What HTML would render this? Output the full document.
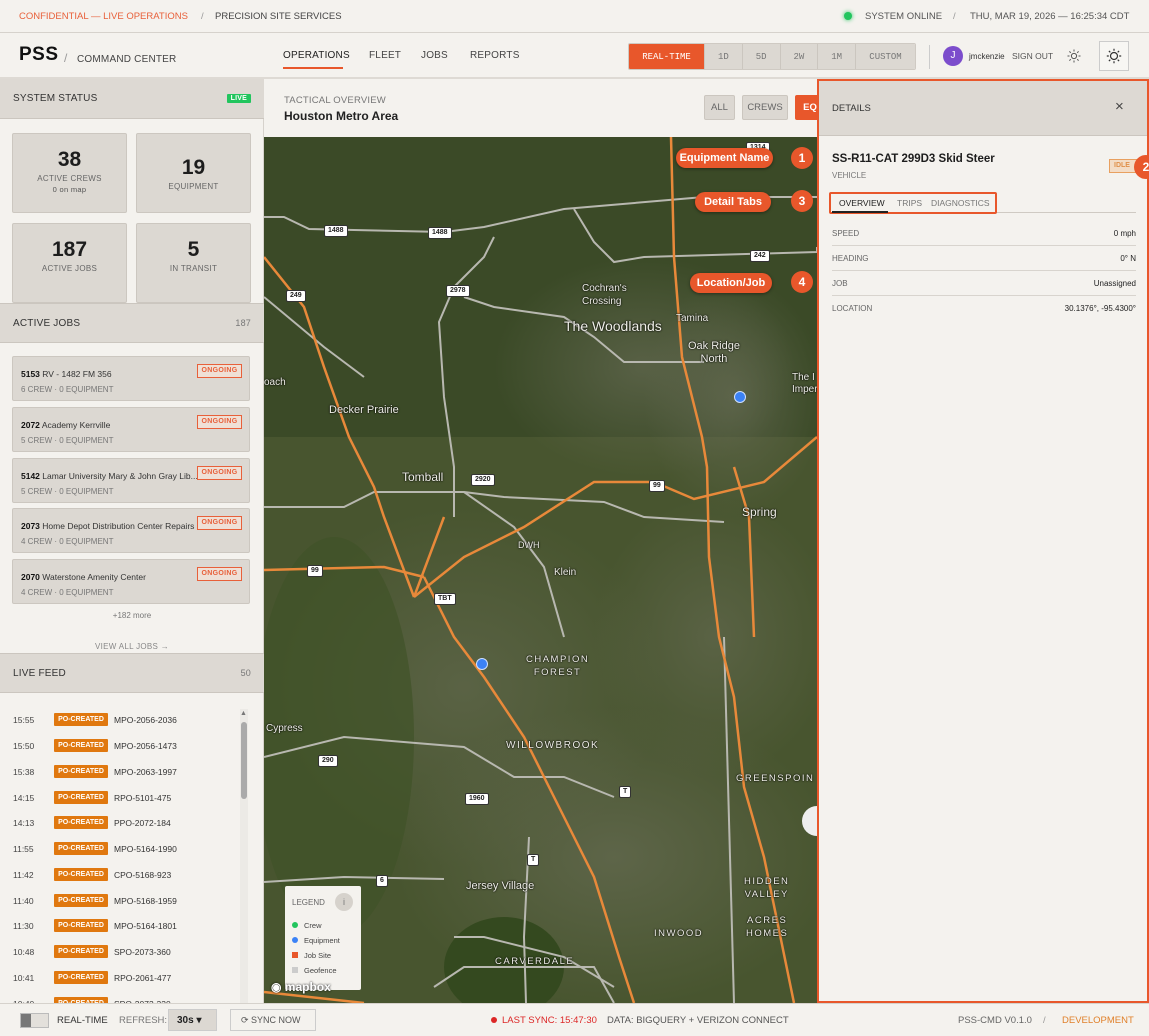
<!DOCTYPE html>
<html><head><meta charset="utf-8"><style>
*{box-sizing:border-box;margin:0;padding:0;white-space:nowrap}
body{width:1149px;height:1036px;overflow:hidden;background:#f4f2ee;font-family:"Liberation Sans",sans-serif;color:#2a2a2a;position:relative;font-size:11px}
.abs{position:absolute}
.topbar{left:0;top:0;width:1149px;height:33px;border-bottom:1px solid #d6d2cc;font-size:9.5px;color:#555}
.hdr{left:0;top:33px;width:1149px;height:46px;border-bottom:2px solid #dedad4}
.nav span{position:absolute;top:17px;font-size:10px;color:#444;letter-spacing:.2px}
.seg{left:628px;top:43px;height:27px;width:288px;display:flex;border:1px solid #cfcac3;border-radius:2px;overflow:hidden;font-family:"Liberation Mono",monospace;font-size:9px;color:#777}
.seg div{flex:1;display:flex;align-items:center;justify-content:center;background:#dcd8d2;border-left:1px solid #cbc6bf}
.side{left:0;top:79px;width:264px;height:924px;background:#f4f2ee;border-right:1px solid #d6d2cc}
.sh{position:absolute;left:0;width:264px;height:40px;background:#ddd9d3;border-bottom:1px solid #cbc6bf;border-top:1px solid #cbc6bf;font-size:10px;color:#333;padding:14px 13px;letter-spacing:.2px}
.sh b{position:absolute;right:13px;top:14px;font-weight:normal;color:#777;font-size:9px}
.card{position:absolute;width:115px;height:80px;background:#dcd8d2;border:1px solid #ccc7c0;border-radius:2px;text-align:center}
.card .n{font-size:21px;font-weight:bold;margin-top:14px;color:#1d1d1d}
.card .l{font-size:8px;color:#666;margin-top:2px;letter-spacing:.3px}
.job{position:absolute;left:12px;width:238px;height:45px;background:#dcd8d2;border:1px solid #ccc7c0;border-radius:2px}
.job .t{position:absolute;left:8px;top:12px;font-size:8.5px;color:#333}
.job .t b{color:#111}
.job .s{position:absolute;left:8px;top:28px;font-size:8px;color:#777}
.job .g{position:absolute;right:7px;top:7px;width:45px;height:14px;border:1px solid #e8603a;color:#e8603a;font-size:7px;text-align:center;line-height:12px;font-weight:bold;letter-spacing:.3px;background:#efe0d6}
.feed{position:absolute;left:13px;font-size:8.5px;color:#444;width:200px;height:14px}
.feed .tm{position:absolute;left:0;top:2px}
.feed .pc{position:absolute;left:41px;top:0;width:54px;height:13px;background:#e0780f;color:#fff;font-size:7px;font-weight:bold;text-align:center;line-height:13px;border-radius:1px}
.feed .id{position:absolute;left:101px;top:2px;color:#333}
.map{left:264px;top:137px;width:553px;height:866px;background:#4b5a3a;overflow:hidden}
.mhdr{left:264px;top:79px;width:553px;height:58px;background:#f4f2ee}
.fbtn{position:absolute;top:95px;height:25px;border:1px solid #cbc6bf;background:#dcd8d2;font-size:9.5px;color:#666;line-height:23px;text-align:center;border-radius:2px}
.det{left:817px;top:79px;width:332px;height:924px;background:#f4f2ee;border:2px solid #e8572b;border-top-width:2px}
.row{position:absolute;left:13px;width:304px;height:25px;border-bottom:1px solid #d8d4ce;font-size:8px;color:#666}
.row span{position:absolute;top:8px}
.row .v{right:0;color:#222}
.pill{position:absolute;height:20px;background:#e8572b;color:#fff;font-weight:bold;font-size:11px;border-radius:10px;text-align:center;line-height:20px;box-shadow:0 1px 3px rgba(0,0,0,.4)}
.num{position:absolute;width:22px;height:22px;border-radius:50%;background:#e8572b;color:#fff;font-weight:bold;font-size:12px;text-align:center;line-height:22px}
.foot{left:0;top:1003px;width:1149px;height:33px;background:#f4f2ee;border-top:1px solid #d6d2cc;font-size:9.5px;color:#555}
.ml{position:absolute;color:#f0f0e8;font-size:11px;text-shadow:0 0 2px #000,0 0 1px #000}
.sh2{position:absolute;background:#fff;border:1px solid #333;font-size:7px;font-weight:bold;padding:0 3px;border-radius:2px;line-height:10px;color:#222}
</style></head><body>
<div class="abs topbar">
 <span class="abs" style="left:19px;top:11px;color:#e8603a">CONFIDENTIAL — LIVE OPERATIONS</span>
 <span class="abs" style="left:201px;top:11px;color:#999">/</span>
 <span class="abs" style="left:215px;top:11px;color:#444">PRECISION SITE SERVICES</span>
 <span class="abs" style="left:844px;top:12px;width:8px;height:8px;border-radius:50%;background:#22c55e;box-shadow:0 0 4px #22c55e"></span>
 <span class="abs" style="left:865px;top:11px">SYSTEM ONLINE</span>
 <span class="abs" style="left:953px;top:11px;color:#999">/</span>
 <span class="abs" style="left:970px;top:11px">THU, MAR 19, 2026 — 16:25:34 CDT</span>
</div>
<div class="abs hdr nav">
 <span style="left:19px;top:11px;font-size:19px;font-weight:bold;color:#111;letter-spacing:.5px">PSS</span>
 <span style="left:64px;top:18px;color:#999;font-size:12px">/</span>
 <span style="left:77px;top:21px;font-size:10px;color:#444">COMMAND CENTER</span>
 <span style="left:283px;color:#222">OPERATIONS</span>
 <span style="left:283px;top:34px;width:60px;height:2px;background:#e8572b"></span>
 <span style="left:369px">FLEET</span>
 <span style="left:421px">JOBS</span>
 <span style="left:470px">REPORTS</span>
</div>
<div class="abs seg"><div style="background:#e8572b;color:#fff;flex:0 0 75px;border:0">REAL-TIME</div><div>1D</div><div>5D</div><div>2W</div><div>1M</div><div style="flex:0 0 60px">CUSTOM</div></div>
<div class="abs" style="left:929px;top:45px;width:1px;height:24px;background:#ccc"></div>
<div class="abs" style="left:943px;top:46px;width:20px;height:20px;border-radius:50%;background:#7c4dcc;color:#fff;font-size:10px;text-align:center;line-height:20px">J</div>
<div class="abs" style="left:969px;top:52px;font-size:8px;color:#333">jmckenzie</div>
<div class="abs" style="left:1012px;top:51px;font-size:8.5px;color:#555">SIGN OUT</div>
<svg class="abs" style="left:1067px;top:49px" width="14" height="14" viewBox="0 0 14 14" stroke="#555" fill="none"><circle cx="7" cy="7" r="2.6"/><path d="M7 0.5v2M7 11.5v2M0.5 7h2M11.5 7h2M2.4 2.4l1.4 1.4M10.2 10.2l1.4 1.4M2.4 11.6l1.4-1.4M10.2 3.8l1.4-1.4"/></svg>
<div class="abs" style="left:1099px;top:41px;width:30px;height:30px;border:1px solid #ccc;background:#f7f6f3"></div>
<svg class="abs" style="left:1106px;top:48px" width="16" height="16" viewBox="0 0 16 16" stroke="#333" fill="none" stroke-width="1.2"><circle cx="8" cy="8" r="3.5"/><path d="M8 .8v2M8 13.2v2M.8 8h2M13.2 8h2M2.9 2.9l1.4 1.4M11.7 11.7l1.4 1.4M2.9 13.1l1.4-1.4M11.7 4.3l1.4-1.4"/></svg>

<div class="abs side">
 <div class="sh" style="top:0;border-top:0">SYSTEM STATUS<b style="top:15px;background:#22c55e;color:#fff;font-weight:bold;font-size:7px;padding:1px 4px;border-radius:1px">LIVE</b></div>
 <div class="card" style="left:12px;top:54px"><div class="n">38</div><div class="l">ACTIVE CREWS</div><div class="l" style="font-size:7.5px;color:#555">0 on map</div></div>
 <div class="card" style="left:136px;top:54px"><div class="n" style="margin-top:22px">19</div><div class="l">EQUIPMENT</div></div>
 <div class="card" style="left:12px;top:144px"><div class="n">187</div><div class="l">ACTIVE JOBS</div></div>
 <div class="card" style="left:136px;top:144px"><div class="n">5</div><div class="l">IN TRANSIT</div></div>
 <div class="sh" style="top:224px">ACTIVE JOBS<b>187</b></div>
 <div class="job" style="top:277px"><div class="t"><b>5153</b> RV - 1482 FM 356</div><div class="s">6 CREW · 0 EQUIPMENT</div><div class="g">ONGOING</div></div>
 <div class="job" style="top:328px"><div class="t"><b>2072</b> Academy Kerrville</div><div class="s">5 CREW · 0 EQUIPMENT</div><div class="g">ONGOING</div></div>
 <div class="job" style="top:379px"><div class="t"><b>5142</b> Lamar University Mary &amp; John Gray Lib...</div><div class="s">5 CREW · 0 EQUIPMENT</div><div class="g">ONGOING</div></div>
 <div class="job" style="top:429px"><div class="t"><b>2073</b> Home Depot Distribution Center Repairs</div><div class="s">4 CREW · 0 EQUIPMENT</div><div class="g">ONGOING</div></div>
 <div class="job" style="top:480px"><div class="t"><b>2070</b> Waterstone Amenity Center</div><div class="s">4 CREW · 0 EQUIPMENT</div><div class="g">ONGOING</div></div>
 <div class="abs" style="left:0;width:264px;text-align:center;top:532px;font-size:8px;color:#777">+182 more</div>
 <div class="abs" style="left:0;width:264px;text-align:center;top:563px;font-size:8px;color:#888;letter-spacing:.3px">VIEW ALL JOBS →</div>
 <div class="sh" style="top:574px">LIVE FEED<b>50</b></div>
 <div class="abs" style="left:240px;top:630px;width:8px;height:294px;background:#eceae6"></div>
 <div class="abs" style="left:241px;top:643px;width:6px;height:77px;background:#aaa;border-radius:3px"></div>
 <div class="abs" style="left:240px;top:631px;font-size:7px;color:#777">▲</div>
</div>
<div class="feed" style="top:713px"><span class="tm">15:55</span><span class="pc">PO-CREATED</span><span class="id">MPO-2056-2036</span></div>
<div class="feed" style="top:739px"><span class="tm">15:50</span><span class="pc">PO-CREATED</span><span class="id">MPO-2056-1473</span></div>
<div class="feed" style="top:765px"><span class="tm">15:38</span><span class="pc">PO-CREATED</span><span class="id">MPO-2063-1997</span></div>
<div class="feed" style="top:791px"><span class="tm">14:15</span><span class="pc">PO-CREATED</span><span class="id">RPO-5101-475</span></div>
<div class="feed" style="top:816px"><span class="tm">14:13</span><span class="pc">PO-CREATED</span><span class="id">PPO-2072-184</span></div>
<div class="feed" style="top:842px"><span class="tm">11:55</span><span class="pc">PO-CREATED</span><span class="id">MPO-5164-1990</span></div>
<div class="feed" style="top:868px"><span class="tm">11:42</span><span class="pc">PO-CREATED</span><span class="id">CPO-5168-923</span></div>
<div class="feed" style="top:894px"><span class="tm">11:40</span><span class="pc">PO-CREATED</span><span class="id">MPO-5168-1959</span></div>
<div class="feed" style="top:919px"><span class="tm">11:30</span><span class="pc">PO-CREATED</span><span class="id">MPO-5164-1801</span></div>
<div class="feed" style="top:945px"><span class="tm">10:48</span><span class="pc">PO-CREATED</span><span class="id">SPO-2073-360</span></div>
<div class="feed" style="top:971px"><span class="tm">10:41</span><span class="pc">PO-CREATED</span><span class="id">RPO-2061-477</span></div>
<div class="feed" style="top:997px;height:6px;overflow:hidden"><span class="tm">10:40</span><span class="pc">PO-CREATED</span><span class="id">SPO-2073-330</span></div>

<div class="abs mhdr">
 <div class="abs" style="left:20px;top:16px;font-size:9.5px;color:#777;letter-spacing:.2px">TACTICAL OVERVIEW</div>
 <div class="abs" style="left:20px;top:30px;font-size:12px;font-weight:bold;color:#222">Houston Metro Area</div>
</div>
<div class="fbtn" style="left:704px;width:31px">ALL</div>
<div class="fbtn" style="left:742px;width:46px">CREWS</div>
<div class="fbtn" style="left:795px;width:30px;background:#e8572b;color:#fff;border-color:#e8572b;font-weight:bold">EQ</div>

<div class="abs map">
<svg width="553" height="866" style="position:absolute;left:0;top:0">
 <defs><radialGradient id="g1"><stop offset="0" stop-color="#6c705a"/><stop offset="1" stop-color="#6c705a" stop-opacity="0"/></radialGradient></defs>
 <rect width="553" height="866" fill="#48552f"/>
 <rect x="0" y="0" width="553" height="300" fill="#3b4a27"/>
 <ellipse cx="380" cy="230" rx="150" ry="110" fill="url(#g1)" opacity=".6"/>
 <ellipse cx="470" cy="260" rx="90" ry="120" fill="url(#g1)" opacity=".6"/>
 <ellipse cx="200" cy="550" rx="200" ry="180" fill="url(#g1)" opacity=".5"/>
 <ellipse cx="350" cy="720" rx="220" ry="150" fill="url(#g1)" opacity=".6"/>
 <ellipse cx="450" cy="500" rx="120" ry="140" fill="url(#g1)" opacity=".5"/>
 <ellipse cx="70" cy="600" rx="80" ry="200" fill="#405228" opacity=".7"/>
 <ellipse cx="240" cy="830" rx="60" ry="50" fill="#34491f"/>
 <g fill="none" stroke="#b8b8b0" stroke-width="2">
  <path d="M0 80 L20 80 L45 92 L180 95 L220 90 L300 72 L440 60 L553 60"/>
  <path d="M230 100 L220 120 L190 150 L175 185 L180 260 L190 330 L190 380"/>
  <path d="M310 72 L330 105 L350 125 L380 120 L553 115 L553 110"/>
  <path d="M200 160 L230 170 L300 180 L330 200 L360 225 L440 225"/>
  <path d="M0 370 L80 370 L110 355 L200 355 L240 360 L340 365 L380 380 L460 385"/>
  <path d="M200 355 L250 390 L280 430 L300 500"/>
  <path d="M0 160 L60 210 L100 240"/>
  <path d="M0 620 L80 600 L200 610 L250 640 L300 640 L350 660"/>
  <path d="M265 700 L260 800 L262 866"/>
  <path d="M190 800 L220 800 L300 820 L350 850"/>
  <path d="M0 745 L80 740 L180 742"/>
  <path d="M170 850 L200 830 L330 830 L350 866"/>
  <path d="M460 500 L470 866"/>
 </g>
 <g fill="none" stroke="#e8893a" stroke-width="2.5">
  <path d="M407 0 L410 120 L418 220 L438 300 L443 330 L445 420 L455 500 L470 560 L480 650 L500 720 L530 866"/>
  <path d="M0 120 L40 170 L60 230 L85 300 L110 350 L120 380 L135 420 L150 460"/>
  <path d="M160 440 L190 500 L220 540 L260 600 L290 660 L330 740 L355 820 L370 866"/>
  <path d="M0 433 L120 430 L160 440"/>
  <path d="M150 460 L200 420 L260 390 L330 345 L390 345 L430 362 L500 345 L553 300"/>
  <path d="M470 330 L485 380 L490 500"/>
  <path d="M0 855 L100 866"/>
  <path d="M180 380 L150 460"/>
 </g>
</svg>
 <div class="sh2" style="left:482px;top:5px">1314</div>
 <div class="sh2" style="left:60px;top:88px">1488</div>
 <div class="sh2" style="left:164px;top:90px">1488</div>
 <div class="sh2" style="left:486px;top:113px">242</div>
 <div class="sh2" style="left:22px;top:153px">249</div>
 <div class="sh2" style="left:182px;top:148px">2978</div>
 <div class="sh2" style="left:207px;top:337px">2920</div>
 <div class="sh2" style="left:385px;top:343px">99</div>
 <div class="sh2" style="left:43px;top:428px">99</div>
 <div class="sh2" style="left:170px;top:456px">TBT</div>
 <div class="sh2" style="left:54px;top:618px">290</div>
 <div class="sh2" style="left:201px;top:656px">1960</div>
 <div class="sh2" style="left:355px;top:649px">T</div>
 <div class="sh2" style="left:263px;top:717px">T</div>
 <div class="sh2" style="left:112px;top:738px">6</div>
 <div class="ml" style="left:318px;top:145px;font-size:10px;line-height:13px">Cochran's<br>Crossing</div>
 <div class="ml" style="left:300px;top:181px;font-size:14px">The Woodlands</div>
 <div class="ml" style="left:412px;top:176px;font-size:10px">Tamina</div>
 <div class="ml" style="left:424px;top:203px;font-size:11px;line-height:13px;text-align:center">Oak Ridge<br>North</div>
 <div class="ml" style="left:528px;top:235px;font-size:10px;line-height:12px">The I<br>Imper</div>
 <div class="ml" style="left:0px;top:240px;font-size:10px">oach</div>
 <div class="ml" style="left:65px;top:267px;font-size:11px">Decker Prairie</div>
 <div class="ml" style="left:138px;top:333px;font-size:12px">Tomball</div>
 <div class="ml" style="left:478px;top:368px;font-size:12px">Spring</div>
 <div class="ml" style="left:254px;top:403px;font-size:9px">DWH</div>
 <div class="ml" style="left:290px;top:430px;font-size:10px">Klein</div>
 <div class="ml" style="left:262px;top:516px;font-size:9.5px;letter-spacing:1.5px;line-height:13px;text-align:center">CHAMPION<br>FOREST</div>
 <div class="ml" style="left:242px;top:603px;font-size:10px;letter-spacing:1.5px">WILLOWBROOK</div>
 <div class="ml" style="left:2px;top:586px;font-size:10px">Cypress</div>
 <div class="ml" style="left:472px;top:636px;font-size:9.5px;letter-spacing:1.5px">GREENSPOIN</div>
 <div class="ml" style="left:202px;top:743px;font-size:11px">Jersey Village</div>
 <div class="ml" style="left:480px;top:738px;font-size:9.5px;letter-spacing:1.5px;line-height:13px;text-align:center">HIDDEN<br>VALLEY</div>
 <div class="ml" style="left:482px;top:777px;font-size:9.5px;letter-spacing:1.5px;line-height:13px;text-align:center">ACRES<br>HOMES</div>
 <div class="ml" style="left:390px;top:791px;font-size:9.5px;letter-spacing:1.5px">INWOOD</div>
 <div class="ml" style="left:231px;top:819px;font-size:9.5px;letter-spacing:1.5px">CARVERDALE</div>
 <div class="abs" style="left:470px;top:254px;width:12px;height:12px;border-radius:50%;background:#3b82f6;border:1px solid #cfe0ff"></div>
 <div class="abs" style="left:212px;top:521px;width:12px;height:12px;border-radius:50%;background:#3b82f6;border:1px solid #cfe0ff"></div>
 <div class="abs" style="left:538px;top:669px;width:30px;height:30px;border-radius:50%;background:#eee"></div>
 <div class="abs" style="left:21px;top:749px;width:76px;height:104px;background:#f4f2ee;border-radius:2px;font-size:7.5px;color:#444">
  <div class="abs" style="left:7px;top:12px;font-size:8px;color:#666">LEGEND</div>
  <div class="abs" style="left:50px;top:7px;width:18px;height:18px;border-radius:50%;background:#d6d2cc;color:#777;text-align:center;line-height:18px;font-size:9px">i</div>
  <div class="abs" style="left:7px;top:35px"><span style="display:inline-block;width:6px;height:6px;border-radius:50%;background:#22c55e;margin-right:6px"></span>Crew</div>
  <div class="abs" style="left:7px;top:50px"><span style="display:inline-block;width:6px;height:6px;border-radius:50%;background:#3b82f6;margin-right:6px"></span>Equipment</div>
  <div class="abs" style="left:7px;top:65px"><span style="display:inline-block;width:6px;height:6px;background:#e8572b;margin-right:6px"></span>Job Site</div>
  <div class="abs" style="left:7px;top:80px"><span style="display:inline-block;width:6px;height:6px;background:#ccc;margin-right:6px"></span>Geofence</div>
 </div>
 <div class="abs" style="left:7px;top:843px;color:#fff;font-weight:bold;font-size:12px;text-shadow:0 0 2px #000">◉ mapbox</div>
 <div class="pill" style="left:412px;top:11px;width:97px">Equipment Name</div>
 <div class="pill" style="left:431px;top:55px;width:76px">Detail Tabs</div>
 <div class="pill" style="left:426px;top:136px;width:82px">Location/Job</div>
 <div class="num" style="left:527px;top:10px">1</div>
 <div class="num" style="left:527px;top:53px">3</div>
 <div class="num" style="left:527px;top:134px">4</div>
</div>

<div class="abs det">
 <div class="abs" style="left:0;top:0;width:328px;height:55px;background:#ddd9d3;border-bottom:1px solid #cbc6bf"></div>
 <div class="abs" style="left:13px;top:22px;font-size:9.5px;color:#333">DETAILS</div>
 <div class="abs" style="left:296px;top:17px;font-size:15px;color:#444">×</div>
 <div class="abs" style="left:13px;top:72px;font-size:11.5px;font-weight:bold;color:#1d1d1d">SS-R11-CAT 299D3 Skid Steer</div>
 <div class="abs" style="left:13px;top:90px;font-size:8px;color:#777">VEHICLE</div>
 <div class="abs" style="left:290px;top:78px;width:30px;height:14px;border:1px solid #e8a060;background:#f3dcc6;color:#e0904a;font-size:7px;font-weight:bold;line-height:12px;padding-left:4px">IDLE</div>
 <div class="num" style="left:315px;top:74px;width:24px;height:24px;line-height:24px">2</div>
 <div class="abs" style="left:13px;top:131px;width:304px;height:1px;background:#cfcac3"></div>
 <div class="abs" style="left:10px;top:111px;width:168px;height:22px;border:2px solid #e8572b;border-radius:2px"></div>
 <div class="abs" style="left:20px;top:117px;font-size:8.5px;color:#222">OVERVIEW</div>
 <div class="abs" style="left:13px;top:130px;width:56px;height:2px;background:#222"></div>
 <div class="abs" style="left:78px;top:117px;font-size:8.5px;color:#777">TRIPS</div>
 <div class="abs" style="left:112px;top:117px;font-size:8.5px;color:#777">DIAGNOSTICS</div>
 <div class="row" style="top:140px"><span>SPEED</span><span class="v">0 mph</span></div>
 <div class="row" style="top:165px"><span>HEADING</span><span class="v">0° N</span></div>
 <div class="row" style="top:190px"><span>JOB</span><span class="v">Unassigned</span></div>
 <div class="row" style="top:215px;border:0"><span>LOCATION</span><span class="v">30.1376°, -95.4300°</span></div>
</div>

<div class="abs foot">
 <div class="abs" style="left:20px;top:9px;width:29px;height:15px;border:1px solid #bbb;background:#e3e0db"><div style="width:10px;height:13px;background:#777"></div></div>
 <div class="abs" style="left:57px;top:11px;color:#333">REAL-TIME</div>
 <div class="abs" style="left:119px;top:11px;color:#777">REFRESH:</div>
 <div class="abs" style="left:168px;top:5px;width:49px;height:22px;background:#dcd8d2;border:1px solid #ccc;font-weight:bold;color:#222;padding:5px 8px;font-size:10px">30s ▾</div>
 <div class="abs" style="left:230px;top:5px;width:86px;height:22px;border:1px solid #ccc;padding:5px 10px;font-size:9px;color:#555">⟳ SYNC NOW</div>
 <div class="abs" style="left:491px;top:13px;width:6px;height:6px;border-radius:50%;background:#dc2626"></div>
 <div class="abs" style="left:502px;top:11px;color:#dc2626">LAST SYNC: 15:47:30</div>
 <div class="abs" style="left:607px;top:11px;color:#555">DATA: BIGQUERY + VERIZON CONNECT</div>
 <div class="abs" style="left:958px;top:11px;color:#666">PSS-CMD V0.1.0</div>
 <div class="abs" style="left:1043px;top:11px;color:#999">/</div>
 <div class="abs" style="left:1062px;top:11px;color:#e0802a">DEVELOPMENT</div>
</div>
</body></html>
